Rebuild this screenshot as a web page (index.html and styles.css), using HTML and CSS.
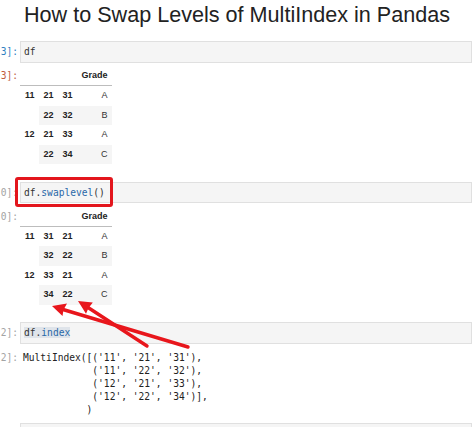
FILE: index.html
```html
<!DOCTYPE html>
<html lang="en">
<head>
<meta charset="utf-8">
<title>How to Swap Levels of MultiIndex in Pandas</title>
<link rel="stylesheet" href="styles.css">
</head>
<body>
<h1 class="title">How to Swap Levels of MultiIndex in Pandas</h1>
<div class="notebook">
  <div class="cell">
    <div class="row in-row">
      <div class="prompt in">3]:</div>
      <div class="input"><span class="tok">df</span></div>
    </div>
    <div class="row out-row table-out">
      <div class="prompt out">3]:</div>
      <div class="output">
        <table class="df">
          <thead>
            <tr><th></th><th></th><th></th><th>Grade</th></tr>
          </thead>
          <tbody>
            <tr><th rowspan="2">11</th><th>21</th><th>31</th><td>A</td></tr>
            <tr><th>22</th><th>32</th><td>B</td></tr>
            <tr><th rowspan="2">12</th><th>21</th><th>33</th><td>A</td></tr>
            <tr><th>22</th><th>34</th><td>C</td></tr>
          </tbody>
        </table>
      </div>
    </div>
  </div>

  <div class="cell">
    <div class="row in-row">
      <div class="prompt in dim">0]:</div>
      <div class="input"><span class="tok">df.</span><span class="prop">swaplevel</span><span class="tok">()</span></div>
      <div class="mark-box"></div>
    </div>
    <div class="row out-row table-out">
      <div class="prompt out dim">0]:</div>
      <div class="output">
        <table class="df">
          <thead>
            <tr><th></th><th></th><th></th><th>Grade</th></tr>
          </thead>
          <tbody>
            <tr><th rowspan="2">11</th><th>31</th><th>21</th><td>A</td></tr>
            <tr><th>32</th><th>22</th><td>B</td></tr>
            <tr><th rowspan="2">12</th><th>33</th><th>21</th><td>A</td></tr>
            <tr><th>34</th><th>22</th><td>C</td></tr>
          </tbody>
        </table>
      </div>
    </div>
  </div>

  <div class="cell">
    <div class="row in-row">
      <div class="prompt in dim">2]:</div>
      <div class="input"><span class="sel"><span class="tok">df.</span><span class="prop">index</span></span></div>
    </div>
    <div class="row out-row text-out">
      <div class="prompt out dim">2]:</div>
      <pre class="output-text">MultiIndex([('11', '21', '31'),
            ('11', '22', '32'),
            ('12', '21', '33'),
            ('12', '22', '34')],
           )</pre>
    </div>
  </div>

  <div class="cell">
    <div class="row in-row">
      <div class="prompt in dim"></div>
      <div class="input"></div>
    </div>
  </div>
</div>

<svg class="arrows" width="474" height="427" viewBox="0 0 474 427" aria-hidden="true">
  <g stroke="#e8161c" stroke-width="3.4" stroke-linecap="round" fill="none">
    <line x1="188" y1="347" x2="63" y2="309.5"/>
    <line x1="147" y1="346" x2="88" y2="307.5"/>
  </g>
  <g fill="#e8161c">
    <polygon points="52,306 67,303.5 63.5,309.8 62.5,316"/>
    <polygon points="78,301 92.8,302.6 88.5,308 86,313.8"/>
  </g>
</svg>
</body>
</html>
```

FILE: styles.css
```css
* {
  box-sizing: border-box;
}

html,
body {
  margin: 0;
  padding: 0;
  background: #ffffff;
}

body {
  position: relative;
  width: 474px;
  height: 427px;
  overflow: hidden;
  font-family: "Liberation Sans", Arial, sans-serif;
}

.title {
  margin: 0 0 13px;
  padding-top: 2px;
  font-size: 21.6px;
  line-height: 26px;
  font-weight: normal;
  color: #222222;
  text-align: center;
  white-space: nowrap;
}

.notebook {
  padding-right: 2px;
}

.row {
  display: flex;
  align-items: flex-start;
}

.in-row {
  position: relative;
}

.prompt {
  flex: 0 0 20px;
  display: flex;
  justify-content: flex-end;
  padding-right: 2px;
  font-family: "DejaVu Sans Mono", monospace;
  font-size: 9.6px;
  white-space: pre;
}

.prompt.in {
  color: #307fc1;
  line-height: 21.5px;
}

.prompt.out {
  color: #bf5b3d;
}

.prompt.dim {
  color: #a3a3a3;
}

.input {
  flex: 1 1 auto;
  height: 21.5px;
  padding-left: 3px;
  background: #f5f5f5;
  border: 1px solid #e0e0e0;
  font-family: "DejaVu Sans Mono", monospace;
  font-size: 9.6px;
  line-height: 19.5px;
  white-space: pre;
}

.tok {
  color: #333333;
}

.prop {
  color: #2a68a8;
}

.sel {
  background: #dfe4ea;
}

.mark-box {
  position: absolute;
  left: 15px;
  top: -5px;
  bottom: -4px;
  width: 98px;
  border: 3.3px solid #e3161d;
  border-radius: 3px;
}

.table-out {
  padding-top: 3.5px;
  margin-bottom: 17.5px;
}

.table-out .prompt {
  line-height: 19.5px;
}

.output {
  flex: 1 1 auto;
}

.df {
  border-collapse: collapse;
  border-spacing: 0;
  font-family: "Liberation Sans", Arial, sans-serif;
  font-size: 9px;
  color: #222222;
}

.df th,
.df td {
  padding: 5.25px 4.5px;
  line-height: 9px;
  text-align: right;
  vertical-align: top;
}

.df th {
  font-weight: bold;
}

.df td {
  font-weight: normal;
  color: #333333;
}

.df thead th {
  padding-bottom: 4.75px;
  border-bottom: 1px solid #bdbdbd;
}

.df tbody tr:nth-child(even) {
  background: #f5f5f5;
}

.text-out {
  padding-top: 7.5px;
  padding-bottom: 7px;
}

.text-out .prompt {
  line-height: 13px;
}

.output-text {
  margin: 0;
  padding-left: 3px;
  font-family: "DejaVu Sans Mono", monospace;
  font-size: 9.6px;
  line-height: 13px;
  color: #222222;
}

.arrows {
  position: absolute;
  left: 0;
  top: 0;
  pointer-events: none;
}
```
